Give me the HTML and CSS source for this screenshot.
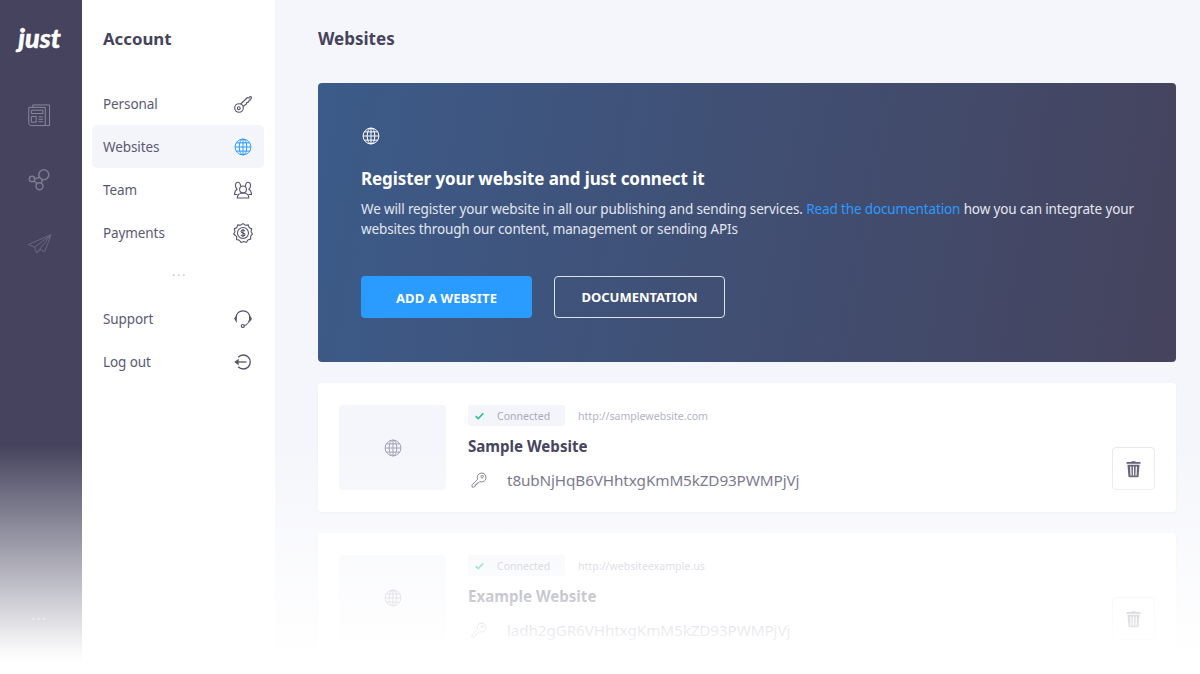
FILE: index.html
```html
<!DOCTYPE html>
<html>
<head>
    <meta charset="utf-8">
    <title>Websites</title>
    <link rel="stylesheet" href="styles.css">
</head>
<body>
    <svg class="sprites" width="0" height="0">
        <symbol id="globe" viewBox="0 0 20 20">
            <g fill="none" stroke="currentColor" stroke-width="1.1">
                <circle cx="10" cy="10" r="8.8"/>
                <ellipse cx="10" cy="10" rx="4.2" ry="8.8"/>
                <path d="M10 1.2v17.6M1.2 10h17.6M2.6 5.4h14.8M2.6 14.6h14.8"/>
            </g>
        </symbol>
        <symbol id="key" viewBox="0 0 18 18">
            <g fill="none" stroke="currentColor" stroke-width="1.1" stroke-linejoin="round">
                <path d="M11.5 1.2a5 5 0 0 1 1.6 9.8 5 5 0 0 1-3.2-.2L8.4 12.4H6.6v1.8H4.8V16L2.9 17H1.2v-2.6l6.2-6.2a5 5 0 0 1 4.1-7z"/>
                <circle cx="12.6" cy="5.2" r="1.4"/>
            </g>
        </symbol>
        <symbol id="trash" viewBox="0 0 16 18">
            <path fill="currentColor" d="M5.6 1.6 6.2.6h3.6l.6 1h4.4c.5 0 .8.3.8.8v1H.4v-1c0-.5.3-.8.8-.8zM1.6 4.4h12.8l-.9 12.4c0 .6-.5 1-1.1 1H3.6c-.6 0-1.1-.4-1.1-1zM4.4 6.4l.4 9.4h1.2l-.3-9.4zm3 0v9.4h1.2V6.4zm3 0-.3 9.4h1.2l.4-9.4z"/>
        </symbol>
    </svg>

    <div class="app">
        <aside class="rail">
            <div class="logo">just</div>
            <svg class="rail-icon rail-news" viewBox="0 0 24 24">
                <g fill="none" stroke="currentColor" stroke-width="1">
                    <path d="M5 3.500V1h17.500v21.500H3A2.500 2.500 0 0 1 .8 20V3.500H18V22"/>
                    <path d="M3.500 6.500h12v3.500h-12zM3.500 13h5v6h-5zM11 13.500h4.500M11 16h4.500M11 18.500h4.500"/>
                </g>
            </svg>
            <svg class="rail-icon rail-share" viewBox="0 0 24 24">
                <g fill="none" stroke="currentColor" stroke-width="1.6">
                    <circle cx="16.500" cy="7" r="5.200"/>
                    <circle cx="4.200" cy="11.500" r="2.800"/>
                    <circle cx="12" cy="19" r="3.600"/>
                    <path d="M7 11.500l5.400-2M6.500 13.500l3 3M14 15.500l1-3.500"/>
                </g>
            </svg>
            <svg class="rail-icon rail-send" viewBox="0 0 24 20">
                <path fill="none" stroke="currentColor" stroke-width="1" stroke-linejoin="round" d="M23.500.8.800 10.500l6.200 2.700 2.200 5.800 3.300-3.600 4.800 2.200zM23.500.8 7 13.200M23.500.8 9.200 19"/>
            </svg>
            <div class="rail-more">...</div>
        </aside>

        <nav class="panel">
            <h2 class="panel-title">Account</h2>
            <ul class="menu">
                <li class="menu-item">
                    <span>Personal</span>
                    <svg class="menu-icon" viewBox="0 0 18 18">
                        <g fill="none" stroke="currentColor" stroke-width="1.100" stroke-linejoin="round">
                            <circle cx="5" cy="13" r="4.300"/>
                            <circle cx="4.800" cy="13.200" r="1.400"/>
                            <path d="M6.600 9 13.500 2.500l1.500.5 1-1.500 1.500.5-.5 2-1.200.3.200 1.500-1.600.2-.2 1.400-1.600.2-.2 1.400-3.200 2.200"/>
                        </g>
                    </svg>
                </li>
                <li class="menu-item is-active">
                    <span>Websites</span>
                    <svg class="menu-icon"><use href="#globe"/></svg>
                </li>
                <li class="menu-item">
                    <span>Team</span>
                    <svg class="menu-icon" viewBox="0 0 18 18">
                        <g fill="none" stroke="currentColor" stroke-width="1.100" stroke-linejoin="round">
                            <path d="M9 5c2 0 3.400 1.500 3.400 3.500S11 12 9 12 5.600 10.500 5.600 8.500 7 5 9 5z"/>
                            <path d="M3.200 17c0-3 2.300-5 5.800-5s5.800 2 5.800 5z"/>
                            <path d="M6.600 5.200C6.400 3 5.400 1.200 4 1.200 2.300 1.200 1.500 3 1.500 4.800c0 1.500.6 2.800 1.700 3.500C1.500 9.200.5 10.800.5 13.500h3M11.400 5.200C11.600 3 12.600 1.200 14 1.200c1.700 0 2.500 1.800 2.500 3.600 0 1.500-.6 2.800-1.700 3.500 1.700.9 2.700 2.500 2.700 5.200h-3"/>
                        </g>
                    </svg>
                </li>
                <li class="menu-item">
                    <span>Payments</span>
                    <svg class="menu-icon menu-icon-big" viewBox="0 0 20 20">
                        <g fill="none" stroke="currentColor" stroke-width="1.100">
                            <path d="M10 .6l2.400 1.600 2.800-.3 1 2.700 2.500 1.300-.6 2.800L19.400 11l-1.800 2.200.1 2.900-2.800.8-1.500 2.400-2.700-.8-2.600 1-1.700-2.300-2.800-.6.100-2.900L.6 11l1.300-2.300-.6-2.800 2.500-1.300 1-2.700 2.800.3z"/>
                            <circle cx="10" cy="10" r="5.500"/>
                            <path d="M12 8.200c-.4-.8-1.100-1.200-2-1.200-1.200 0-2 .6-2 1.500 0 2 4 1 4 3 0 .9-.8 1.500-2 1.500-.9 0-1.600-.4-2-1.200M10 5.800v8.400"/>
                        </g>
                    </svg>
                </li>
            </ul>
            <div class="menu-dots">...</div>
            <ul class="menu">
                <li class="menu-item">
                    <span>Support</span>
                    <svg class="menu-icon" viewBox="0 0 18 18">
                        <g fill="none" stroke="currentColor" stroke-width="1.200">
                            <path d="M2.200 7.500C2.200 3.500 5 .8 9 .8s6.800 2.700 6.800 6.700c0 3.800-2.500 7.400-6 8.500"/>
                            <path d="M2.200 6.500 .8 8.500l1.400 2.300zM15.800 6.500l1.400 2v.5l-1.400 1.800z"/>
                            <circle cx="8.800" cy="16" r="1.500"/>
                        </g>
                    </svg>
                </li>
                <li class="menu-item">
                    <span>Log out</span>
                    <svg class="menu-icon" viewBox="0 0 18 18">
                        <g fill="none" stroke="currentColor" stroke-width="1.300">
                            <path d="M4.200 4.200A7 7 0 1 1 4.200 13.800"/>
                            <path d="M1 9h11.500"/>
                        </g>
                        <path fill="currentColor" d="M.4 9l4.200-3.200v6.400z"/>
                    </svg>
                </li>
            </ul>
        </nav>

        <main class="main">
            <h1 class="page-title">Websites</h1>

            <section class="hero">
                <svg class="hero-icon"><use href="#globe"/></svg>
                <h3 class="hero-title">Register your website and just connect it</h3>
                <p class="hero-text">We will register your website in all our publishing and sending services. <a href="#">Read the documentation</a> how you can integrate your websites through our content, management or sending APIs</p>
                <div class="hero-actions">
                    <a class="btn btn-primary" href="#">ADD A WEBSITE</a>
                    <a class="btn btn-outline" href="#">DOCUMENTATION</a>
                </div>
            </section>

            <article class="site-card">
                <div class="site-thumb"><svg class="thumb-icon"><use href="#globe"/></svg></div>
                <div class="site-body">
                    <div class="site-meta">
                        <span class="badge">
                            <svg class="badge-check" viewBox="0 0 10 8"><path fill="none" stroke="currentColor" stroke-width="1.800" d="M.8 4.200 3.600 7 9.200 1"/></svg>
                            Connected
                        </span>
                        <span class="site-url">http://samplewebsite.com</span>
                    </div>
                    <h4 class="site-name">Sample Website</h4>
                    <div class="site-key">
                        <svg class="key-icon"><use href="#key"/></svg>
                        <span>t8ubNjHqB6VHhtxgKmM5kZD93PWMPjVj</span>
                    </div>
                </div>
                <button class="trash-btn"><svg class="trash-icon"><use href="#trash"/></svg></button>
            </article>

            <article class="site-card">
                <div class="site-thumb"><svg class="thumb-icon"><use href="#globe"/></svg></div>
                <div class="site-body">
                    <div class="site-meta">
                        <span class="badge">
                            <svg class="badge-check" viewBox="0 0 10 8"><path fill="none" stroke="currentColor" stroke-width="1.800" d="M.8 4.200 3.600 7 9.200 1"/></svg>
                            Connected
                        </span>
                        <span class="site-url">http://websiteexample.us</span>
                    </div>
                    <h4 class="site-name">Example Website</h4>
                    <div class="site-key">
                        <svg class="key-icon"><use href="#key"/></svg>
                        <span>ladh2gGR6VHhtxgKmM5kZD93PWMPjVj</span>
                    </div>
                </div>
                <button class="trash-btn"><svg class="trash-icon"><use href="#trash"/></svg></button>
            </article>
        </main>
    </div>

    <!-- white fade over the bottom of the page -->
    <div class="fade"></div>
</body>
</html>
```

FILE: styles.css
```css
* {
    box-sizing: border-box;
}

html, body {
    margin: 0;
    height: 100%;
    overflow: hidden;
}

body {
    position: relative;
    background: white;
    color: #45435d;
    font-family: "Noto Sans", "Open Sans", sans-serif;
}

.sprites {
    position: absolute;
}

.app {
    display: flex;
    height: 674px;
}

/* Left rail */
.rail {
    width: 82px;
    background: #45435d;
    display: flex;
    flex-direction: column;
    align-items: center;
    flex-shrink: 0;
}

.logo {
    margin-top: 23px;
    margin-right: 3px;
    font-family: "Lato", sans-serif;
    font-size: 27px;
    line-height: 30px;
    font-weight: 900;
    font-style: italic;
    color: white;
    -webkit-text-stroke: 0.4px white;
}

.rail-icon {
    display: block;
    color: #7d7b92;
}

.rail-news {
    width: 23px;
    height: 23px;
    margin-top: 51px;
    margin-right: 3px;
    color: #8d8ba1;
}

.rail-share {
    width: 23px;
    height: 23px;
    margin-top: 41px;
    margin-right: 3px;
}

.rail-send {
    width: 25px;
    height: 20px;
    margin-top: 43px;
    margin-right: 3px;
    color: #6a6880;
}

.rail-more {
    margin-top: auto;
    margin-bottom: 50px;
    margin-right: 3px;
    font-size: 14px;
    letter-spacing: 1.5px;
    color: white;
    opacity: 0.5;
}

/* Account panel */
.panel {
    width: 193px;
    background: white;
    padding: 0 11px 0 10px;
    flex-shrink: 0;
}

.panel-title {
    margin: 25px 0 29px 11px;
    font-size: 16.8px;
    line-height: 28px;
    font-weight: 700;
}

.menu {
    list-style: none;
    margin: 0;
    padding: 0;
}

.menu-item {
    display: flex;
    align-items: center;
    justify-content: space-between;
    height: 43px;
    padding: 0 12px 0 11px;
    font-size: 13.5px;
    letter-spacing: -0.1px;
    color: #5b5972;
    border-radius: 5px;
}

.is-active {
    background: #f4f5fb;
}

.menu-icon {
    width: 18px;
    height: 18px;
    color: #55536c;
}

.menu-icon-big {
    width: 20px;
    height: 20px;
    margin-right: -1px;
}

.is-active .menu-icon {
    color: #2a9bff;
}

.menu-dots {
    height: 43px;
    line-height: 34px;
    text-align: center;
    font-size: 13px;
    letter-spacing: 1.5px;
    color: #c4c5d6;
    padding-left: 3px;
}

/* Main column */
.main {
    flex: 1;
    background: #f5f6fb;
    padding: 0 24px 0 43px;
}

.page-title {
    margin: 25px 0 30px;
    font-size: 17px;
    line-height: 28px;
    font-weight: 700;
}

.hero {
    height: 279px;
    padding: 44px 30px 0 43px;
    border-radius: 4px;
    background: linear-gradient(100deg, #3c5b89 0%, #45435d 100%);
    color: white;
}

.hero-icon {
    display: block;
    width: 18px;
    height: 18px;
    margin-left: 1px;
}

.hero-title {
    margin: 21px 0 0;
    font-size: 17px;
    letter-spacing: -0.09px;
    line-height: 26px;
    font-weight: 700;
}

.hero-text {
    margin: 7px 0 0;
    font-size: 13.5px;
    letter-spacing: -0.13px;
    line-height: 20px;
    color: #e3e6f0;
}

.hero-text a {
    color: #2a9bff;
    text-decoration: none;
}

.hero-actions {
    display: flex;
    gap: 22px;
    margin-top: 37px;
}

.btn {
    width: 171px;
    height: 42px;
    display: flex;
    align-items: center;
    justify-content: center;
    border-radius: 4px;
    font-size: 13px;
    font-weight: 700;
    color: white;
    text-decoration: none;
}

.btn-primary {
    background: #2a9bff;
    letter-spacing: 0.15px;
    padding-top: 1px;
}

.btn-outline {
    border: 1px solid #dfe1ea;
}

/* Website cards */
.site-card {
    display: flex;
    height: 129px;
    margin-top: 21px;
    padding: 22px 21px;
    background: white;
    border-radius: 4px;
    box-shadow: 0 1px 3px rgba(69, 67, 93, 0.05);
}

.site-thumb {
    width: 107px;
    height: 85px;
    background: #f5f6fb;
    border-radius: 4px;
    display: flex;
    align-items: center;
    justify-content: center;
    flex-shrink: 0;
}

.thumb-icon {
    width: 18px;
    height: 18px;
    color: #a09fb4;
}

.site-body {
    flex: 1;
    margin-left: 22px;
}

.site-meta {
    display: flex;
    align-items: center;
    gap: 13px;
}

.badge {
    display: flex;
    align-items: center;
    width: 97px;
    height: 21px;
    padding-left: 7px;
    background: #f4f5fb;
    border-radius: 3px;
    font-size: 10.5px;
    color: #a9a8bd;
}

.badge-check {
    width: 9px;
    height: 8px;
    margin-right: 13px;
    color: #1fc28b;
}

.site-url {
    font-size: 10.6px;
    color: #b3b2c6;
}

.site-name {
    margin: 8px 0 0;
    font-size: 15.1px;
    line-height: 24px;
    font-weight: 700;
}

.site-key {
    display: flex;
    align-items: center;
    margin-top: 10px;
    font-size: 15.3px;
    letter-spacing: -0.14px;
    line-height: 24px;
    color: #5f5d76;
}

.key-icon {
    width: 16px;
    height: 16px;
    margin: 0 20px 0 3px;
    color: #6a6880;
}

.trash-btn {
    align-self: flex-end;
    width: 43px;
    height: 43px;
    padding: 0;
    background: white;
    border: 1px solid #e8e8f0;
    border-radius: 4px;
    display: flex;
    align-items: center;
    justify-content: center;
}

.trash-icon {
    width: 15px;
    height: 18px;
    color: #55536c;
}

/* Lies over the bottom of every column */
.fade {
    position: absolute;
    left: 0;
    right: 0;
    top: 445px;
    height: 229px;
    background: linear-gradient(to bottom, rgba(255, 255, 255, 0) 0%, rgba(255, 255, 255, 0.97) 90%, white 95%);
    pointer-events: none;
}
```
